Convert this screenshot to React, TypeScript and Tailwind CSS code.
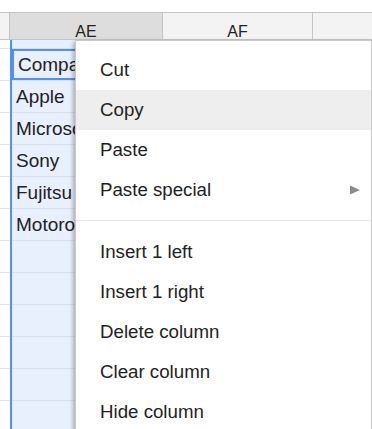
import React from 'react';

const cells = ['Company', 'Apple', 'Microsoft', 'Sony', 'Fujitsu', 'Motorola', '', '', '', '', '', ''];

const items1 = ['Cut', 'Copy', 'Paste', 'Paste special'];
const items2 = ['Insert 1 left', 'Insert 1 right', 'Delete column', 'Clear column', 'Hide column'];

function MenuItem({ label, hover, sub }: { label: string; hover?: boolean; sub?: boolean }) {
  return (
    <div
      className={`flex items-center h-[40px] pl-[24px] pr-[10px] text-[18.7px] leading-[22px] text-[#222] ${
        hover ? 'bg-[#eeeeee]' : ''
      }`}
    >
      <span className="flex-1">{label}</span>
      {sub && (
        <svg width="10" height="10" viewBox="0 0 10 10" className="mr-[1px]">
          <path d="M0 0.5 L10 5 L0 9.5 Z" fill="#8a8a8a" />
        </svg>
      )}
    </div>
  );
}

export default function App() {
  return (
    <div
      className="relative w-[372px] h-[429px] overflow-hidden bg-white"
      style={{ fontFamily: '"Liberation Sans", Arial, sans-serif' }}
    >
      {/* top strip */}
      <div className="h-[12px] bg-white" />

      {/* column headers */}
      <div className="flex h-[28px] border-t border-b border-[#c4c4c4] text-[16px] leading-[15px] text-[#222]">
        <div className="w-[10px] bg-[#f3f3f3] border-r border-[#c4c4c4]" />
        <div className="w-[153px] bg-[#dddddd] border-r border-[#c4c4c4] flex items-end justify-center">AE</div>
        <div className="w-[150px] bg-[#f3f3f3] border-r border-[#c4c4c4] flex items-end justify-center">AF</div>
        <div className="flex-1 bg-[#f3f3f3]" />
      </div>

      {/* grid body */}
      <div className="flex">
        <div className="w-[10px] flex flex-col">
          <div className="h-[8px]" />
          {cells.map((_, i) => (
            <div key={i} className="h-[32px] border-t border-[#e2e2e2]" />
          ))}
        </div>
        <div className="w-[153px] flex flex-col bg-[#e8effd] border-l-2 border-[#4d90fe]">
          <div className="h-[8px]" />
          {cells.map((c, i) => (
            <div key={i} className="h-[32px] border-t border-[#d9dfea] text-[19px] text-[#222] whitespace-nowrap overflow-hidden">
              {i === 0 ? (
                <div className="h-full border-2 border-[#4d90fe] pl-[4px] pt-[2px] flex items-center">{c}</div>
              ) : (
                <div className="h-full pl-[4px] pt-[2px] flex items-center">{c}</div>
              )}
            </div>
          ))}
        </div>
        <div className="flex-1" />
      </div>

      {/* context menu */}
      <div className="absolute left-[75px] top-[40px] w-[297px] h-[400px] bg-white border border-[#c8c8c8] shadow-[-2px_2px_4px_rgba(0,0,0,0.28)] pt-[9px]">
        {items1.map((l) => (
          <MenuItem key={l} label={l} hover={l === 'Copy'} sub={l === 'Paste special'} />
        ))}
        <div className="pt-[10px] pb-[11px]">
          <div className="h-px bg-[#e5e5e5]" />
        </div>
        {items2.map((l) => (
          <MenuItem key={l} label={l} />
        ))}
      </div>
    </div>
  );
}
